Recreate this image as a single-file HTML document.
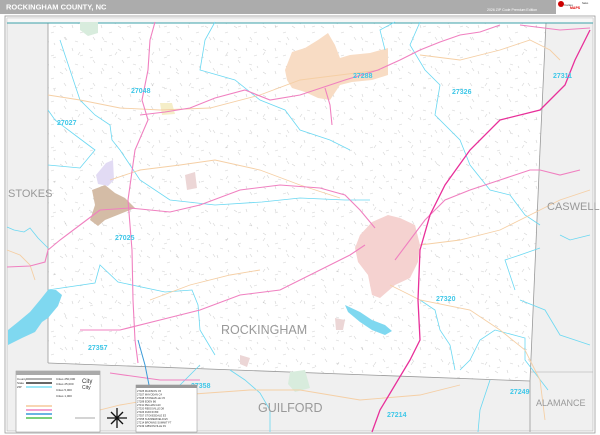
<!DOCTYPE html>
<html><head><meta charset="utf-8"><style>
html,body{margin:0;padding:0;background:#fff;}
body{width:600px;height:435px;overflow:hidden;font-family:"Liberation Sans",sans-serif;}
svg{display:block}
</style></head><body>
<svg width="600" height="435" viewBox="0 0 600 435" xmlns="http://www.w3.org/2000/svg" font-family="Liberation Sans, sans-serif">
<defs>
<pattern id="tx" width="29" height="23" patternUnits="userSpaceOnUse">
<path d="M2 3l3 2M14 2l1 3M22 10l3-1M6 14l2 3M17 18l3 1M25 20l1 2" stroke="#9a9a9a" stroke-width="0.6" fill="none"/>
</pattern>
<pattern id="tx2" width="37" height="31" patternUnits="userSpaceOnUse">
<path d="M4 24l2-3M28 6l2 3M16 27l3-1" stroke="#a5a5a5" stroke-width="0.6" fill="none"/>
</pattern>
</defs>
<rect x="0" y="0" width="600" height="14" fill="#acacac"/>
<text x="6" y="9.5" font-size="7.5" font-weight="bold" fill="#fff">ROCKINGHAM COUNTY, NC</text>
<text x="487" y="11" font-size="3.5" fill="#fff">2026 ZIP Code Premium Edition</text>
<rect x="556" y="0" width="44" height="14" fill="#fff"/>
<circle cx="561" cy="4" r="3" fill="#c00"/>
<text x="564" y="6" font-size="3" fill="#333">Cartes</text>
<text x="570" y="9" font-size="3.5" font-weight="bold" fill="#d00">MAPS</text>
<text x="582" y="4" font-size="2.5" fill="#333">Sales</text>
<rect x="5" y="16" width="590" height="417" fill="#fff" stroke="#999" stroke-width="0.8"/>
<rect x="7" y="18" width="586" height="413" fill="#f0f0f0" stroke="#aaa" stroke-width="0.5"/>
<polygon points="48,23 546,23 540,150 530,381 48,363" fill="#fff"/>
<polygon points="48,23 546,23 540,150 530,381 48,363" fill="url(#tx)" opacity="0.45"/>
<polygon points="48,23 546,23 540,150 530,381 48,363" fill="url(#tx2)" opacity="0.5"/>
<rect x="7" y="18" width="586" height="5" fill="#f7f7f7" stroke="#bbb" stroke-width="0.4"/>
<line x1="48" y1="23" x2="48" y2="363" stroke="#999" stroke-width="0.8"/>
<polyline points="48,363 530,381" stroke="#999" stroke-width="0.8" fill="none"/>
<polyline points="546,23 540,150 530,381 530,432" stroke="#999" stroke-width="0.8" fill="none"/>
<line x1="530" y1="372" x2="593" y2="372" stroke="#aaa" stroke-width="0.6"/>
<line x1="7" y1="23" x2="593" y2="23" stroke="#3ba0a8" stroke-width="1"/>
<!-- towns -->
<path d="M285,70 L292,52 L305,48 L318,40 L328,33 L335,45 L340,58 L350,55 L370,53 L388,48 L388,75 L372,80 L352,82 L340,85 L330,100 L318,98 L305,92 L292,88 L287,80Z" fill="#f8dcc4"/>
<path d="M360,235 L372,222 L388,215 L400,218 L415,225 L420,245 L418,262 L410,278 L395,285 L380,298 L372,295 L368,275 L358,262 L355,248Z" fill="#f5d2d0"/>
<path d="M92,190 L105,185 L115,193 L125,198 L135,208 L120,214 L105,220 L98,226 L90,220 L95,205Z" fill="#d4bca6"/>
<path d="M96,175 L106,163 L113,160 L114,180 L108,186 L98,184Z" fill="#e2dbf4"/>
<path d="M160,103 L172,103 L175,114 L162,115Z" fill="#f5eec8"/>
<path d="M80,22 L98,22 L98,33 L88,36 L80,30Z" fill="#d8ecdd"/>
<path d="M290,372 L305,370 L310,388 L295,392 L288,384Z" fill="#d8ecdd"/>
<path d="M185,175 L195,172 L197,188 L187,190Z" fill="#ecd6d6"/>
<path d="M335,318 L345,320 L343,330 L336,330Z" fill="#ecd6d6"/>
<path d="M240,355 L250,358 L247,367 L240,364Z" fill="#ecd6d6"/>
<!-- lakes -->
<path d="M48,290 L40,300 L30,312 L18,322 L8,330 L8,345 L22,338 L35,332 L42,322 L48,318 L58,306 L62,295 L56,290Z" fill="#7fd8f0"/>
<path d="M345,305 L360,312 L372,320 L385,325 L392,331 L385,335 L372,330 L360,322 L348,312Z" fill="#7fd8f0"/>
<g stroke="#6ad8f2" stroke-width="0.8" fill="none">
<path d="M7,227 L14,230 L24,232 L30,228 L38,238 L48,248"/>
<path d="M48,290 L95,283 L100,265 L118,282 L165,292 L192,290 L198,305 L200,330 L215,355"/>
<path d="M48,165 L80,168 L95,150 L75,135 L55,120 L48,110"/>
<path d="M60,40 L70,70 L80,100 L95,115 L110,125 L112,140 L120,150"/>
<path d="M120,150 L140,180 L170,200 L215,205 L262,202 L300,198 L345,200 L370,200"/>
<path d="M215,22 L205,40 L200,70 L235,80 L260,100 L285,110 L300,130 L330,140 L350,150"/>
<path d="M420,22 L410,45 L425,70 L440,85 L435,115 L460,140 L470,165 L490,190 L510,195 L525,215 L540,225"/>
<path d="M395,22 L380,30 L385,50"/>
<path d="M540,248 L520,255 L505,260 L515,290"/>
<path d="M520,300 L545,310 L560,335 L575,340 L590,345"/>
<path d="M460,370 L470,360 L480,340 L495,330 L525,338 L525,360 L548,390"/>
<path d="M230,370 L245,380 L260,393 L270,410 L270,432"/>
<path d="M165,400 L180,385 L200,365"/>
<path d="M420,300 L435,310 L440,330 L450,345 L455,370"/>
<path d="M490,380 L480,410 L478,432"/>
<path d="M560,235 L570,240 L590,235"/>
</g>
<g stroke="#f5cfa5" stroke-width="0.9" fill="none">
<path d="M48,95 L80,100 L120,108 L160,110 L210,108 L260,95 L300,80 L340,75 L380,70"/>
<path d="M420,55 L460,60 L500,50 L530,40 L550,50 L560,60"/>
<path d="M110,180 L140,170 L180,165 L215,160 L260,170 L300,185 L340,198"/>
<path d="M420,245 L460,240 L500,230 L530,215 L560,200 L590,190"/>
<path d="M7,250 L20,255 L30,265 L35,280"/>
<path d="M390,285 L420,300 L470,310 L500,330 L525,350 L540,380 L545,420"/>
<path d="M60,420 L120,405 L180,395 L250,390 L300,390 L360,400 L420,395 L460,385"/>
<path d="M150,300 L190,285 L230,275 L260,270"/>
</g>
<g stroke="#f080c0" stroke-width="1.1" fill="none">
<path d="M155,22 L150,40 L148,70 L142,100 L148,120 L135,150 L128,200 L132,250 L133,300 L135,340 L138,363"/>
<path d="M100,210 L130,208 L170,212 L200,205 L240,190 L280,185 L320,188 L345,195 L360,210 L375,228"/>
<path d="M7,267 L30,266 L45,262 L48,250 L60,240 L80,225 L100,210"/>
<path d="M140,115 L165,112 L190,108 L215,98 L245,90 L270,100 L300,95 L330,85 L345,80 L378,70 L400,60 L420,50 L440,42 L460,35 L480,32 L500,25"/>
<path d="M325,88 L330,105 L332,125"/>
<path d="M80,330 L120,330 L160,320 L200,310 L240,295 L280,290 L320,270 L350,255 L365,245"/>
<path d="M395,260 L410,240 L425,220 L445,200 L470,190 L500,180 L530,170 L540,170 L560,175 L580,170"/>
<path d="M520,25 L560,30 L590,28"/>
<path d="M110,373 L160,380 L200,380"/>
</g>
<path d="M590,30 L575,60 L565,85 L540,110 L500,120 L470,150 L445,185 L430,215 L420,250 L418,300 L420,340 L410,360 L395,385 L380,410 L372,432" stroke="#e8309a" stroke-width="1.3" fill="none"/>
<path d="M138,340 L145,365 L150,390 L155,410" stroke="#3a9ad8" stroke-width="1" fill="none"/>
<g font-size="7" font-weight="bold" fill="#3ec7e8">
<text x="353" y="78">27288</text>
<text x="131" y="93">27048</text>
<text x="57" y="125">27027</text>
<text x="115" y="240">27025</text>
<text x="88" y="350">27357</text>
<text x="436" y="301">27320</text>
<text x="452" y="94">27326</text>
<text x="553" y="78">27311</text>
<text x="191" y="388">27358</text>
<text x="387" y="417">27214</text>
<text x="510" y="394">27249</text>
</g>
<g font-size="11" fill="#999">
<text x="8" y="197">STOKES</text>
<text x="547" y="210">CASWELL</text>
<text x="221" y="334" font-size="12.5">ROCKINGHAM</text>
<text x="258" y="412" font-size="12.5">GUILFORD</text>
<text x="536" y="406" font-size="9">ALAMANCE</text>
</g>
<rect x="16" y="371" width="84" height="61" fill="#fff" stroke="#888" stroke-width="0.5"/>
<rect x="16" y="371" width="84" height="4" fill="#aaa"/>
<g stroke-width="1" fill="none">
<line x1="26" y1="379" x2="52" y2="379" stroke="#666"/>
<line x1="26" y1="383" x2="52" y2="383" stroke="#333" stroke-width="1.5"/>
<line x1="26" y1="387" x2="52" y2="387" stroke="#7ee0f5" stroke-width="1.5"/>
<line x1="26" y1="406" x2="52" y2="406" stroke="#f5c99a" stroke-width="1.5"/>
<line x1="26" y1="410" x2="52" y2="410" stroke="#f080c0" stroke-width="1.5"/>
<line x1="26" y1="414" x2="52" y2="414" stroke="#3a9ad8" stroke-width="1.5"/>
<line x1="26" y1="418" x2="52" y2="418" stroke="#50c050" stroke-width="1.5"/>
<line x1="75" y1="418" x2="95" y2="418" stroke="#555" stroke-width="0.5"/>
</g>
<g font-size="3" fill="#333"><text x="17" y="380">County</text><text x="17" y="384">State</text><text x="17" y="388">ZIP</text>
<text x="56" y="380">Cities 250,000</text><text x="56" y="385">Cities 25,000</text><text x="56" y="391">Cities 5,000</text><text x="56" y="397">Cities 1,000</text></g>
<text x="82" y="383" font-size="6" fill="#333">City</text>
<text x="82" y="389" font-size="5" fill="#333">City</text>
<g stroke="#111" stroke-width="1.3"><line x1="117" y1="408" x2="117" y2="428"/><line x1="107" y1="418" x2="127" y2="418"/><line x1="111" y1="412" x2="123" y2="424"/><line x1="123" y1="412" x2="111" y2="424"/></g>
<rect x="136" y="385" width="61" height="47" fill="#fff" stroke="#888" stroke-width="0.5"/>
<rect x="136" y="385" width="61" height="3" fill="#999"/>
<g font-size="2.6" fill="#333">
<text x="137" y="392">27025  MADISON  C5</text><text x="137" y="395.5">27027  MAYODAN  C4</text><text x="137" y="399">27048  STONEVILLE  C5</text><text x="137" y="402.5">27288  EDEN  B6</text><text x="137" y="406">27311  PELHAM  A10</text><text x="137" y="409.5">27320  REIDSVILLE  D8</text><text x="137" y="413">27326  RUFFIN  B9</text><text x="137" y="416.5">27357  STOKESDALE  E3</text><text x="137" y="420">27358  SUMMERFIELD  E5</text><text x="137" y="423.5">27214  BROWNS SUMMIT  F7</text><text x="137" y="427">27249  GIBSONVILLE  F9</text>
</g>
</svg>
</body></html>
